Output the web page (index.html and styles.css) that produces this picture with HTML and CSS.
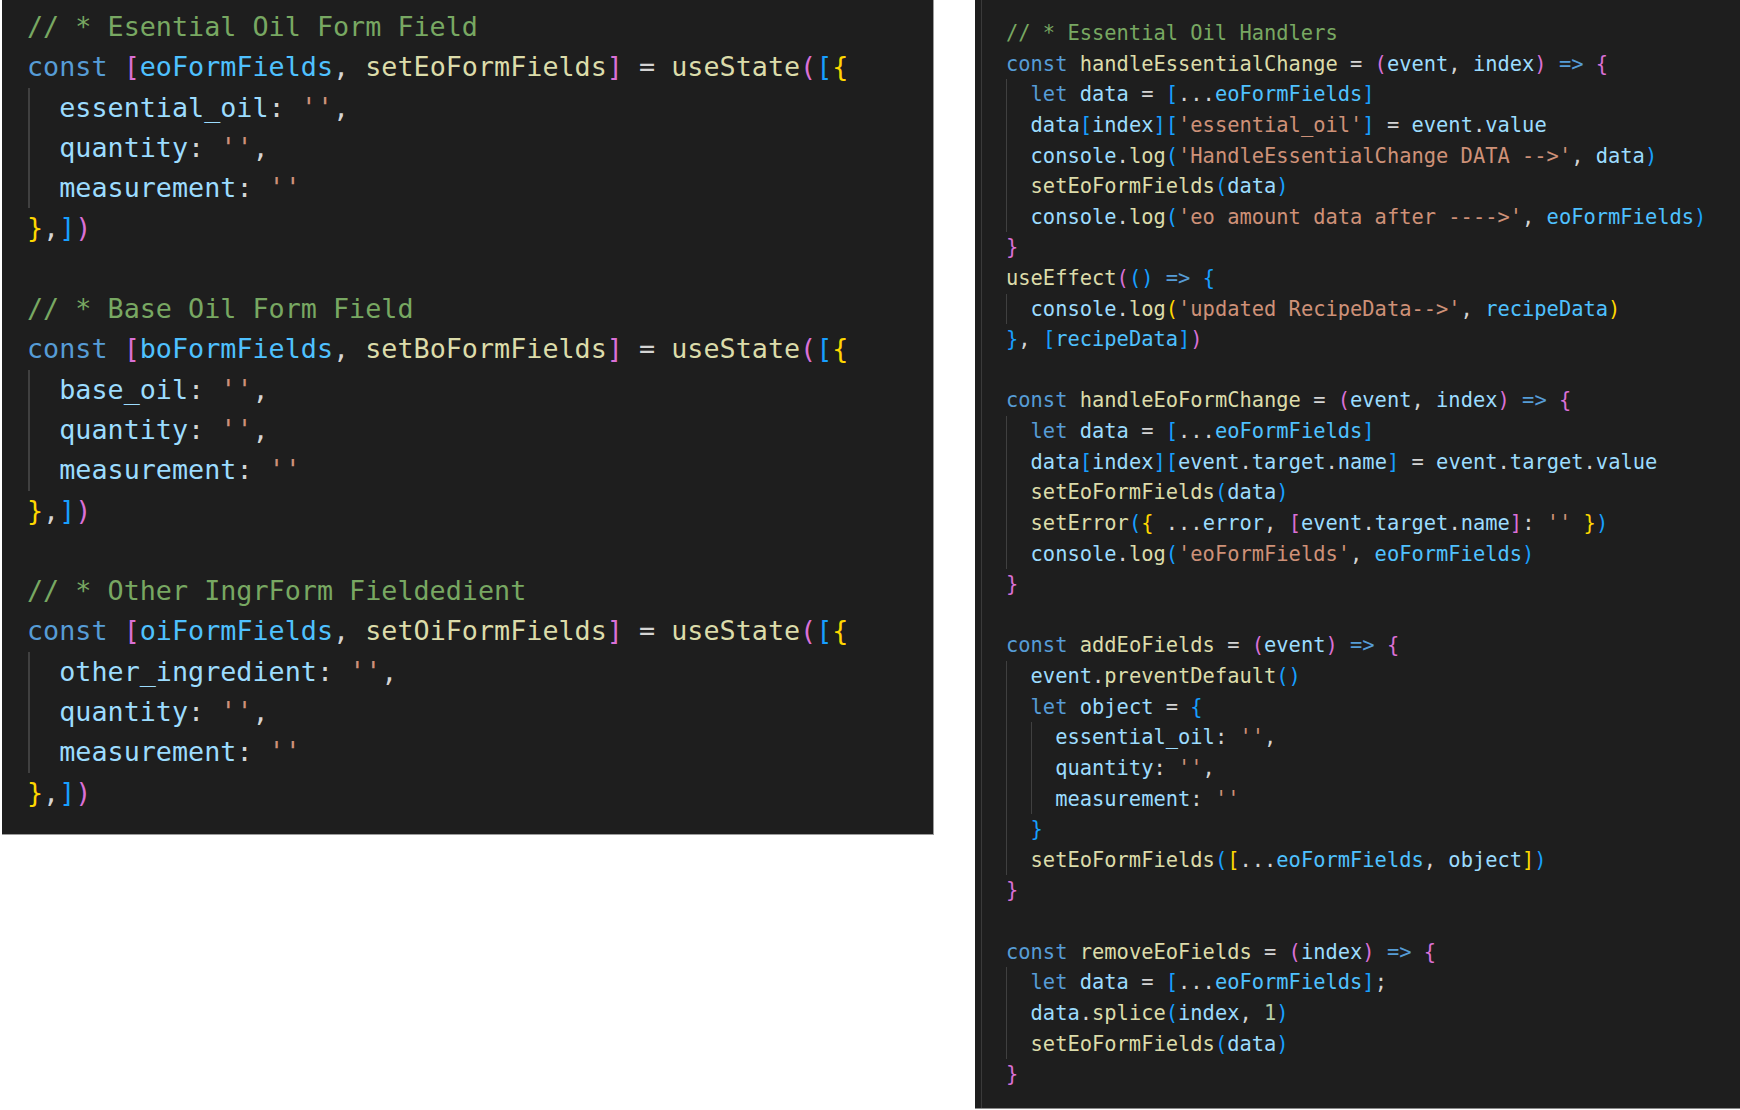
FILE: index.html
```html
<!DOCTYPE html>
<html lang="en">
<head>
<meta charset="utf-8">
<title>Essential Oil Form Fields</title>
<link rel="stylesheet" href="styles.css">
</head>
<body>
<div class="page">
  <div class="panel panel-left">
    <div class="code code-left">
      <div class="ln"><span class="c">// * Esential Oil Form Field</span></div>
      <div class="ln"><span class="k">const</span> <span class="b2">[</span><span class="cv">eoFormFields</span>, <span class="f">setEoFormFields</span><span class="b2">]</span> = <span class="f">useState</span><span class="b2">(</span><span class="b3">[</span><span class="b1">{</span></div>
      <div class="guide">
        <div class="ln">  <span class="v">essential_oil</span>: <span class="s">''</span>,</div>
        <div class="ln">  <span class="v">quantity</span>: <span class="s">''</span>,</div>
        <div class="ln">  <span class="v">measurement</span>: <span class="s">''</span></div>
      </div>
      <div class="ln"><span class="b1">}</span>,<span class="b3">]</span><span class="b2">)</span></div>
      <div class="ln blank"> </div>
      <div class="ln"><span class="c">// * Base Oil Form Field</span></div>
      <div class="ln"><span class="k">const</span> <span class="b2">[</span><span class="cv">boFormFields</span>, <span class="f">setBoFormFields</span><span class="b2">]</span> = <span class="f">useState</span><span class="b2">(</span><span class="b3">[</span><span class="b1">{</span></div>
      <div class="guide">
        <div class="ln">  <span class="v">base_oil</span>: <span class="s">''</span>,</div>
        <div class="ln">  <span class="v">quantity</span>: <span class="s">''</span>,</div>
        <div class="ln">  <span class="v">measurement</span>: <span class="s">''</span></div>
      </div>
      <div class="ln"><span class="b1">}</span>,<span class="b3">]</span><span class="b2">)</span></div>
      <div class="ln blank"> </div>
      <div class="ln"><span class="c">// * Other IngrForm Fieldedient</span></div>
      <div class="ln"><span class="k">const</span> <span class="b2">[</span><span class="cv">oiFormFields</span>, <span class="f">setOiFormFields</span><span class="b2">]</span> = <span class="f">useState</span><span class="b2">(</span><span class="b3">[</span><span class="b1">{</span></div>
      <div class="guide">
        <div class="ln">  <span class="v">other_ingredient</span>: <span class="s">''</span>,</div>
        <div class="ln">  <span class="v">quantity</span>: <span class="s">''</span>,</div>
        <div class="ln">  <span class="v">measurement</span>: <span class="s">''</span></div>
      </div>
      <div class="ln"><span class="b1">}</span>,<span class="b3">]</span><span class="b2">)</span></div>
    </div>
  </div>

  <div class="panel panel-right">
    <div class="editor">
      <div class="code code-right">
        <div class="ln"><span class="c">// * Essential Oil Handlers</span></div>
        <div class="ln"><span class="k">const</span> <span class="f">handleEssentialChange</span> = <span class="b2">(</span><span class="v">event</span>, <span class="v">index</span><span class="b2">)</span> <span class="k">=&gt;</span> <span class="b2">{</span></div>
        <div class="guide guide-thin">
          <div class="ln">  <span class="k">let</span> <span class="v">data</span> = <span class="b3">[</span>...<span class="cv">eoFormFields</span><span class="b3">]</span></div>
          <div class="ln">  <span class="v">data</span><span class="b3">[</span><span class="v">index</span><span class="b3">][</span><span class="s">'essential_oil'</span><span class="b3">]</span> = <span class="v">event</span>.<span class="v">value</span></div>
          <div class="ln">  <span class="v">console</span>.<span class="f">log</span><span class="b3">(</span><span class="s">'HandleEssentialChange DATA --&gt;'</span>, <span class="v">data</span><span class="b3">)</span></div>
          <div class="ln">  <span class="f">setEoFormFields</span><span class="b3">(</span><span class="v">data</span><span class="b3">)</span></div>
          <div class="ln">  <span class="v">console</span>.<span class="f">log</span><span class="b3">(</span><span class="s">'eo amount data after ----&gt;'</span>, <span class="cv">eoFormFields</span><span class="b3">)</span></div>
        </div>
        <div class="ln"><span class="b2">}</span></div>
        <div class="ln"><span class="f">useEffect</span><span class="b2">(</span><span class="b3">()</span> <span class="k">=&gt;</span> <span class="b3">{</span></div>
        <div class="guide guide-thin">
          <div class="ln">  <span class="v">console</span>.<span class="f">log</span><span class="b1">(</span><span class="s">'updated RecipeData--&gt;'</span>, <span class="cv">recipeData</span><span class="b1">)</span></div>
        </div>
        <div class="ln"><span class="b3">}</span>, <span class="b3">[</span><span class="cv">recipeData</span><span class="b3">]</span><span class="b2">)</span></div>
        <div class="ln blank"> </div>
        <div class="ln"><span class="k">const</span> <span class="f">handleEoFormChange</span> = <span class="b2">(</span><span class="v">event</span>, <span class="v">index</span><span class="b2">)</span> <span class="k">=&gt;</span> <span class="b2">{</span></div>
        <div class="guide guide-thin">
          <div class="ln">  <span class="k">let</span> <span class="v">data</span> = <span class="b3">[</span>...<span class="cv">eoFormFields</span><span class="b3">]</span></div>
          <div class="ln">  <span class="v">data</span><span class="b3">[</span><span class="v">index</span><span class="b3">][</span><span class="v">event</span>.<span class="v">target</span>.<span class="v">name</span><span class="b3">]</span> = <span class="v">event</span>.<span class="v">target</span>.<span class="v">value</span></div>
          <div class="ln">  <span class="f">setEoFormFields</span><span class="b3">(</span><span class="v">data</span><span class="b3">)</span></div>
          <div class="ln">  <span class="f">setError</span><span class="b3">(</span><span class="b1">{</span> ...<span class="v">error</span>, <span class="b2">[</span><span class="v">event</span>.<span class="v">target</span>.<span class="v">name</span><span class="b2">]</span>: <span class="s">''</span> <span class="b1">}</span><span class="b3">)</span></div>
          <div class="ln">  <span class="v">console</span>.<span class="f">log</span><span class="b3">(</span><span class="s">'eoFormFields'</span>, <span class="cv">eoFormFields</span><span class="b3">)</span></div>
        </div>
        <div class="ln"><span class="b2">}</span></div>
        <div class="ln blank"> </div>
        <div class="ln"><span class="k">const</span> <span class="f">addEoFields</span> = <span class="b2">(</span><span class="v">event</span><span class="b2">)</span> <span class="k">=&gt;</span> <span class="b2">{</span></div>
        <div class="guide guide-thin">
          <div class="ln">  <span class="v">event</span>.<span class="f">preventDefault</span><span class="b3">()</span></div>
          <div class="ln">  <span class="k">let</span> <span class="v">object</span> = <span class="b3">{</span></div>
          <div class="guide guide-thin guide-l2">
            <div class="ln">    <span class="v">essential_oil</span>: <span class="s">''</span>,</div>
            <div class="ln">    <span class="v">quantity</span>: <span class="s">''</span>,</div>
            <div class="ln">    <span class="v">measurement</span>: <span class="s">''</span></div>
          </div>
          <div class="ln">  <span class="b3">}</span></div>
          <div class="ln">  <span class="f">setEoFormFields</span><span class="b3">(</span><span class="b1">[</span>...<span class="cv">eoFormFields</span>, <span class="v">object</span><span class="b1">]</span><span class="b3">)</span></div>
        </div>
        <div class="ln"><span class="b2">}</span></div>
        <div class="ln blank"> </div>
        <div class="ln"><span class="k">const</span> <span class="f">removeEoFields</span> = <span class="b2">(</span><span class="v">index</span><span class="b2">)</span> <span class="k">=&gt;</span> <span class="b2">{</span></div>
        <div class="guide guide-thin">
          <div class="ln">  <span class="k">let</span> <span class="v">data</span> = <span class="b3">[</span>...<span class="cv">eoFormFields</span><span class="b3">]</span>;</div>
          <div class="ln">  <span class="v">data</span>.<span class="f">splice</span><span class="b3">(</span><span class="v">index</span>, <span class="n">1</span><span class="b3">)</span></div>
          <div class="ln">  <span class="f">setEoFormFields</span><span class="b3">(</span><span class="v">data</span><span class="b3">)</span></div>
        </div>
        <div class="ln"><span class="b2">}</span></div>
      </div>
    </div>
  </div>
</div>
</body>
</html>
```

FILE: styles.css
```css
html, body {
  margin: 0;
  padding: 0;
  background: #ffffff;
}

.page {
  display: flex;
  align-items: flex-start;
  width: 1740px;
  height: 1110px;
  overflow: hidden;
}

.panel {
  background: #1e1e1e;
  box-sizing: border-box;
}

.panel-left {
  margin-left: 2px;
  width: 932px;
  height: 835px;
  border-right: 1px solid #9c9c9c;
  border-bottom: 1px solid #9c9c9c;
  padding: 7px 0 0 25px;
}

.panel-right {
  margin-left: 41px;
  width: 765px;
  height: 1109px;
  border-bottom: 1px solid #8a8a8a;
  padding-left: 6px;
}

.editor {
  height: 100%;
  border-left: 1px solid #3a3a3a;
  padding: 18px 0 0 24px;
  box-sizing: border-box;
}

.code {
  font-family: "DejaVu Sans Mono", "Liberation Mono", monospace;
  color: #d4d4d4;
}

.code-left {
  font-size: 26.75px;
  line-height: 40.3px;
}

.code-right {
  font-size: 20.42px;
  line-height: 30.62px;
}

.ln {
  white-space: pre;
}

.code-left .blank {
  height: 40.3px;
}

.code-right .blank {
  height: 30.62px;
}

.guide {
  background-image: linear-gradient(#404040, #404040);
  background-repeat: no-repeat;
  background-size: 2px 100%;
  background-position: 1px 0;
}

.guide-thin {
  background-size: 1px 100%;
  background-position: 0 0;
}

.guide-l2 {
  background-position: 2ch 0;
}

.c { color: #78a862; }
.k { color: #569cd6; }
.f { color: #dcdcaa; }
.v { color: #9cdcfe; }
.cv { color: #4fc1ff; }
.s { color: #ce9178; }
.n { color: #b5cea8; }
.b1 { color: #ffd700; }
.b2 { color: #da70d6; }
.b3 { color: #179fff; }
```
